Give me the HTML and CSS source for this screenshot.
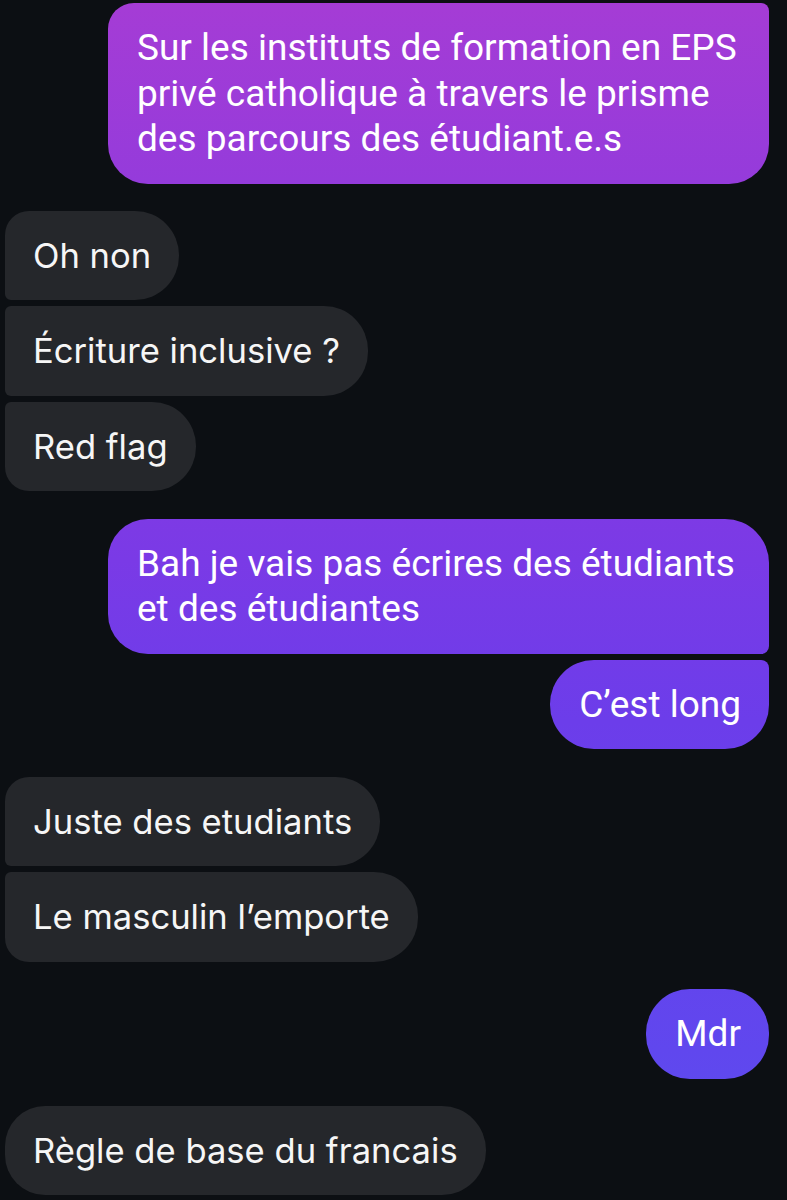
FILE: index.html
```html
<!DOCTYPE html>
<html lang="fr">
<head>
<meta charset="utf-8">
<title>Messages</title>
<link rel="stylesheet" href="styles.css">
</head>
<body>
<main class="thread">
  <section class="group group-sent">
    <div class="bubble sent sent-cont sent-wide">Sur les instituts de formation en EPS privé catholique à travers le prisme des parcours des étudiant.e.s</div>
  </section>
  <section class="group group-recv">
    <div class="bubble recv recv-first">Oh non</div>
    <div class="bubble recv recv-mid">Écriture inclusive ?</div>
    <div class="bubble recv recv-last">Red flag</div>
  </section>
  <section class="group group-sent">
    <div class="bubble sent sent-first sent-wide">Bah je vais pas écrires des étudiants et des étudiantes</div>
    <div class="bubble sent sent-last">C’est long</div>
  </section>
  <section class="group group-recv">
    <div class="bubble recv recv-first">Juste des etudiants</div>
    <div class="bubble recv recv-last">Le masculin l’emporte</div>
  </section>
  <section class="group group-sent">
    <div class="bubble sent sent-single">Mdr</div>
  </section>
  <section class="group group-recv">
    <div class="bubble recv recv-single">Règle de base du francais</div>
  </section>
</main>
</body>
</html>
```

FILE: styles.css
```css
html, body {
  margin: 0;
  padding: 0;
  background: #0c0f13;
}

.thread {
  display: flex;
  flex-direction: column;
  gap: 27.4px;
  padding: 3px 18px 0 5px;
  width: 787px;
  box-sizing: border-box;
}

.group {
  display: flex;
  flex-direction: column;
  gap: 6px;
}

.group-sent {
  align-items: flex-end;
}

.group-recv {
  align-items: flex-start;
}

.bubble {
  box-sizing: border-box;
  padding: 22px 28px;
  line-height: 45.5px;
  color: #ffffff;
  max-width: 661px;
}

.sent {
  font-family: Roboto, "Liberation Sans", sans-serif;
  font-size: 37px;
  padding: 22px 28px 22px 29px;
  background: linear-gradient(to bottom, #a53cd5 0px, #953bdb 180px, #7a3ae6 560px, #6c3dea 720px, #6047ee 1050px, #5a4ef0 1200px) fixed;
  border-radius: 44px;
}

.sent-wide {
  width: 661px;
}

.sent-cont {
  border-radius: 26px 8px 40px 40px;
}

.sent-first {
  border-radius: 40px 44px 8px 40px;
}

.sent-last {
  border-radius: 44px 8px 44px 44px;
}

.sent-single {
  border-radius: 44px;
}

.recv {
  font-family: Inter, "Noto Sans", sans-serif;
  font-size: 34.6px;
  background: #25272b;
  color: #f6f6f6;
}

.recv-first {
  border-radius: 24px 44px 44px 6px;
}

.recv-mid {
  border-radius: 6px 44px 44px 6px;
}

.recv-last {
  border-radius: 6px 44px 44px 24px;
}

.recv-single {
  border-radius: 40px 44px 44px 40px;
}
```
